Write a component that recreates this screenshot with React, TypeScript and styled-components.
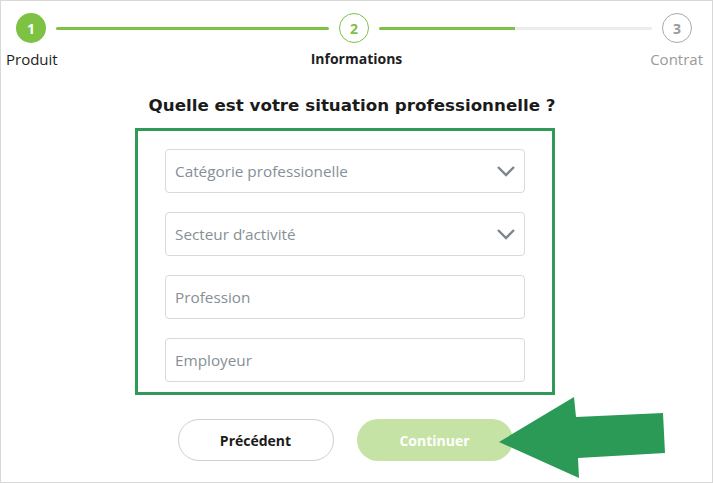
import React, { FC } from 'react';
import styled, { createGlobalStyle } from 'styled-components';

const GlobalStyle = createGlobalStyle`
    html, body {
        margin: 0;
        padding: 0;
        background: #ffffff;
    }
    * {
        box-sizing: border-box;
    }
`;

const Page = styled.div`
    position: relative;
    width: 713px;
    height: 483px;
    border: 1px solid #d8d8d8;
    font-family: 'Open Sans', 'Liberation Sans', sans-serif;
    color: #1e1e1e;
    overflow: hidden;
`;

const Track = styled.div`
    display: flex;
    align-items: center;
    padding: 12px 20px 0 15px;
`;

const Circle = styled.div<{ $state: 'done' | 'current' | 'todo' }>`
    flex: none;
    width: 30px;
    height: 30px;
    border-radius: 50%;
    display: flex;
    align-items: center;
    justify-content: center;
    font-size: 14px;
    font-weight: 700;
    background: ${(p) => (p.$state === 'done' ? '#7dc243' : '#ffffff')};
    color: ${(p) => (p.$state === 'done' ? '#ffffff' : p.$state === 'current' ? '#7dc243' : '#9a9a9a')};
    border: ${(p) => (p.$state === 'done' ? 'none' : p.$state === 'current' ? '1.5px solid #7dc243' : '1.5px solid #a8a8a8')};
`;

const Line = styled.div<{ $fill: number }>`
    flex: 1;
    height: 3px;
    margin: 0 10px;
    border-radius: 2px;
    background: linear-gradient(
        to right,
        #7dc243 0%,
        #7dc243 ${(p) => p.$fill}%,
        #ececec ${(p) => p.$fill}%,
        #ececec 100%
    );
`;

const Labels = styled.div`
    display: grid;
    grid-template-columns: 1fr auto 1fr;
    align-items: center;
    padding: 7px 9px 0 5px;
    line-height: 18px;
`;

const Label = styled.div<{ $align: 'start' | 'center' | 'end'; $state: 'done' | 'current' | 'todo' }>`
    justify-self: ${(p) => p.$align};
    font-size: ${(p) => (p.$state === 'current' ? '14px' : '15px')};
    font-weight: ${(p) => (p.$state === 'current' ? 700 : 400)};
    color: ${(p) => (p.$state === 'todo' ? '#9a9a9a' : '#1e1e1e')};
    padding-left: ${(p) => (p.$align === 'center' ? '4px' : '0')};
`;

const Main = styled.div`
    width: 420px;
    margin-left: 134px;
    display: flex;
    flex-direction: column;
    align-items: center;
`;

const Title = styled.h1`
    margin: 26px 0 0 14px;
    font-family: 'DejaVu Sans', 'Open Sans', sans-serif;
    font-size: 16.7px;
    font-weight: 700;
    line-height: 22px;
    white-space: nowrap;
    color: #1b1b1b;
`;

const FormBox = styled.div`
    width: 420px;
    margin-top: 12px;
    border: 3px solid #2f9a56;
    padding: 18px 27px 10px;
    display: flex;
    flex-direction: column;
    gap: 19px;
`;

const Field = styled.div`
    height: 44px;
    border: 1px solid #d9d9d9;
    border-radius: 4px;
    display: flex;
    align-items: center;
    justify-content: space-between;
    padding: 0 8px 0 9px;
    font-size: 15.3px;
    color: #858f95;
`;

const Chevron = styled.svg`
    width: 20px;
    height: 12px;
    flex: none;
`;

const Actions = styled.div`
    display: flex;
    gap: 23px;
    margin-top: 24px;
`;

const Button = styled.button<{ $primary?: boolean }>`
    width: 156px;
    height: 42px;
    border-radius: 21px;
    font-family: inherit;
    font-size: 14px;
    font-weight: 700;
    cursor: pointer;
    border: ${(p) => (p.$primary ? 'none' : '1px solid #cfcfcf')};
    background: ${(p) => (p.$primary ? '#c6e3a6' : '#ffffff')};
    color: ${(p) => (p.$primary ? '#ffffff' : '#1b1b1b')};
`;

const Arrow = styled.svg`
    position: absolute;
    left: 489px;
    top: 389px;
    width: 180px;
    height: 93px;
`;

const steps = [
    { n: 1, label: 'Produit', state: 'done' as const, align: 'start' as const },
    { n: 2, label: 'Informations', state: 'current' as const, align: 'center' as const },
    { n: 3, label: 'Contrat', state: 'todo' as const, align: 'end' as const },
];

const fields = [
    { label: 'Catégorie professionelle', select: true },
    { label: 'Secteur d’activité', select: true },
    { label: 'Profession', select: false },
    { label: 'Employeur', select: false },
];

const App: FC = () => (
    <>
        <GlobalStyle />
        <Page>
            <Track>
                <Circle $state="done">1</Circle>
                <Line $fill={100} />
                <Circle $state="current">2</Circle>
                <Line $fill={50} />
                <Circle $state="todo">3</Circle>
            </Track>
            <Labels>
                {steps.map((s) => (
                    <Label key={s.n} $align={s.align} $state={s.state}>
                        {s.label}
                    </Label>
                ))}
            </Labels>
            <Main>
                <Title>Quelle est votre situation professionnelle ?</Title>
                <FormBox>
                    {fields.map((f) => (
                        <Field key={f.label}>
                            <span>{f.label}</span>
                            {f.select && (
                                <Chevron viewBox="0 0 20 12">
                                    <path d="M2 2 L10 10 L18 2" fill="none" stroke="#7b868c" strokeWidth="2.4" />
                                </Chevron>
                            )}
                        </Field>
                    ))}
                </FormBox>
                <Actions>
                    <Button>Précédent</Button>
                    <Button $primary>Continuer</Button>
                </Actions>
            </Main>
            <Arrow viewBox="0 0 180 93">
                <polygon
                    points="9,52 84,7 86,27 173,23 175,63 88,68 89,88"
                    fill="#2b9a57"
                />
            </Arrow>
        </Page>
    </>
);

export default App;
